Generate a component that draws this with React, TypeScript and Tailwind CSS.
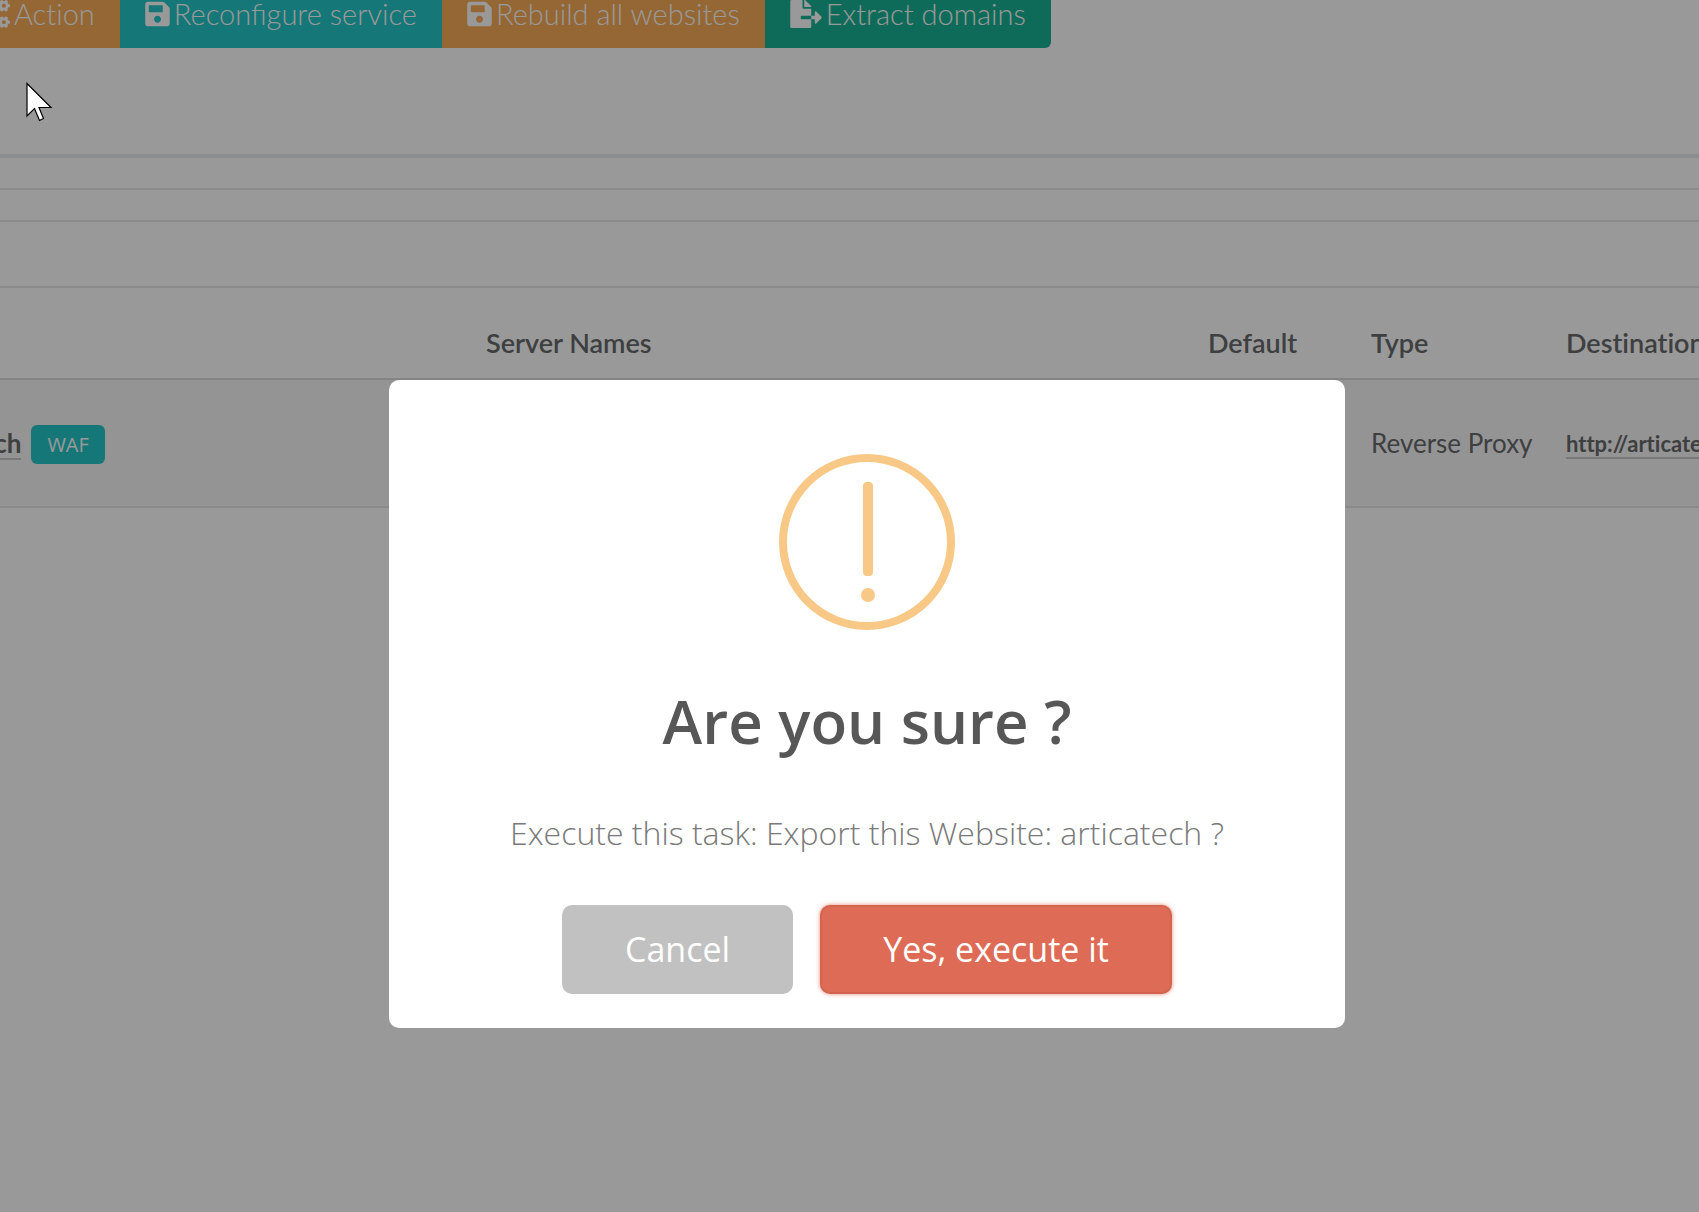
import { useState } from 'react';
import { FaCogs, FaFileExport, FaSave } from 'react-icons/fa';

const actions = [
  { label: 'Action', icon: FaCogs, iconWidth: 'w-[35px]', color: 'bg-[#f8ac59]' },
  { label: 'Reconfigure service', icon: FaSave, iconWidth: 'w-[25px]', color: 'bg-[#23c6c8]' },
  { label: 'Rebuild all websites', icon: FaSave, iconWidth: 'w-[25px]', color: 'bg-[#f8ac59]' },
  { label: 'Extract domains', icon: FaFileExport, iconWidth: 'w-8', color: 'bg-[#1ab394]' },
];

const columns = [
  { label: '', width: 'min-w-[580px]' },
  { label: 'Server Names', width: 'min-w-[722px]' },
  { label: 'Default', width: 'min-w-[163px]' },
  { label: 'Type', width: 'min-w-[195px]' },
  { label: 'Destinations', width: 'min-w-[420px]' },
];

const sites = [
  { name: 'articatech', tag: 'WAF', type: 'Reverse Proxy', destination: 'http://articatech.com' },
];

function Toolbar() {
  return (
    <div className="-mt-5 ml-15 flex">
      {actions.map(({ label, icon: Icon, iconWidth, color }) => (
        <button
          key={label}
          className={`flex h-[68px] items-center gap-1 whitespace-nowrap px-[25px] text-[29px] font-light leading-10 text-white first:rounded-l-md first:[font-variant-ligatures:none] last:rounded-r-md ${color}`}
        >
          <Icon className={`h-7 shrink-0 ${iconWidth}`} />
          {label}
        </button>
      ))}
    </div>
  );
}

function SiteTable() {
  return (
    <table className="border-collapse whitespace-nowrap text-left text-[26px] leading-[38px] [font-variant-ligatures:none]">
      <thead>
        <tr className="h-[91px] border-b-2 border-[#dddddd] align-bottom text-[27px]">
          {columns.map((col) => (
            <th key={col.label} className={`px-4 pb-4 font-semibold ${col.width}`}>
              {col.label}
            </th>
          ))}
        </tr>
      </thead>
      <tbody>
        {sites.map((site) => (
          <tr key={site.name} className="h-32 border-b-2 border-[#e7e7e7] bg-[#f7f7f7]">
            <td className="px-4 pt-[2px]">
              <div className="flex items-center gap-[10px]">
                <a href="#" className="border-b-2 border-[#c8c8c8] font-bold leading-[30px]">
                  {site.name}
                </a>
                <span className="rounded-md bg-[#23c6c8] px-4 font-['Open_Sans',sans-serif] text-xl leading-[39px] text-white">
                  {site.tag}
                </span>
              </div>
            </td>
            <td />
            <td />
            <td className="px-4">{site.type}</td>
            <td className="px-4">
              <a href="#" className="border-b-2 border-[#c8c8c8] text-[22px] font-bold">
                {site.destination}
              </a>
            </td>
          </tr>
        ))}
      </tbody>
    </table>
  );
}

function WarningIcon() {
  return (
    <svg width="176" height="176" viewBox="0 0 176 176" fill="#f8c886" aria-hidden="true">
      <circle cx="88" cy="88" r="84" fill="none" stroke="#f8c886" strokeWidth="8" />
      <rect x="84" y="28" width="10" height="94" rx="4" />
      <circle cx="89" cy="141" r="7" />
    </svg>
  );
}

function ConfirmDialog({ onClose }: { onClose: () => void }) {
  return (
    <div className="fixed inset-0 flex items-start justify-center bg-black/40 pl-[35px] pt-[380px] font-['Open_Sans',sans-serif]">
      <div
        role="dialog"
        aria-labelledby="confirm-title"
        className="flex w-full max-w-[956px] flex-col items-center rounded-[10px] bg-white px-8 pb-[34px] pt-[74px] text-center"
      >
        <WarningIcon />
        <h2 id="confirm-title" className="mt-[51px] text-[60px] font-semibold leading-[80px] text-[#575757]">
          Are you sure ?
        </h2>
        <p className="mt-[52px] text-[32px] font-light leading-10 text-[#797979]">
          Execute this task: Export this Website: articatech ?
        </p>
        <div className="mt-[52px] flex gap-[27px] text-[34px] font-normal leading-[49px] text-white">
          <button onClick={onClose} className="rounded-[10px] bg-[#c1c1c1] px-[63px] py-5">
            Cancel
          </button>
          <button
            onClick={onClose}
            className="rounded-[10px] bg-[#dd6b55] px-[63px] py-5 shadow-[0_0_4px_rgba(221,107,85,0.8),inset_0_0_0_2px_rgba(0,0,0,0.05)]"
          >
            Yes, execute it
          </button>
        </div>
      </div>
    </div>
  );
}

function Pointer() {
  return (
    <svg className="pointer-events-none fixed left-[26px] top-[82px]" width="28" height="42" viewBox="0 0 28 42">
      <path d="M1 1.5V34L8.5 26.5L13.5 38.5L17.5 36.5L13 25.5H25Z" fill="#fff" stroke="#000" strokeWidth="1.2" />
    </svg>
  );
}

export default function App() {
  const [open, setOpen] = useState(true);

  return (
    <div className="min-h-screen overflow-hidden bg-white font-[Lato,sans-serif] text-[#676a6c]">
      <div className="-ml-[110px]">
        <Toolbar />
        <div className="mt-[106px] h-9 border-b-2 border-t-4 border-[#e7eaec]" />
        <div className="h-8 border-b-2 border-[#e7e7e7]" />
        <div className="h-[66px] border-b-2 border-[#e7e7e7]" />
        <SiteTable />
      </div>
      {open && <ConfirmDialog onClose={() => setOpen(false)} />}
      <Pointer />
    </div>
  );
}
